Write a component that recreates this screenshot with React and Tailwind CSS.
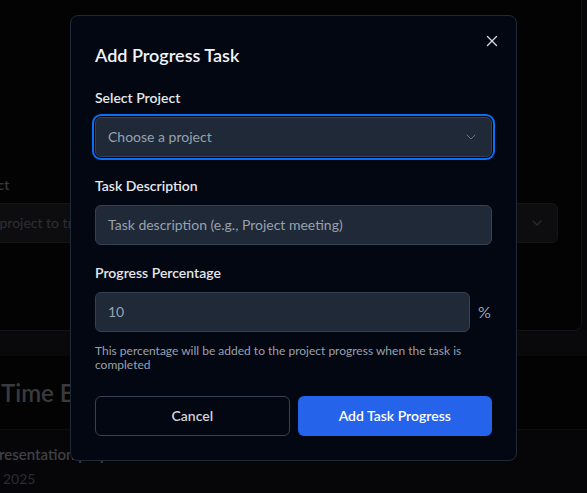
import { ChevronDown, X } from "lucide-react";

function Backdrop() {
  return (
    <div className="flex flex-col h-full">
      <div className="h-[331px] bg-[#070709] flex">
        <div className="w-[582px] h-full bg-[#030304] border-r border-b border-[#131316] rounded-br-lg flex flex-col pt-[175px]">
          <div className="-ml-[76px] text-sm font-semibold text-[#3a3a3e] leading-5">Select Project</div>
          <div className="mt-[8px] -ml-[65px] w-[623px] h-10 rounded-md bg-[#0d0d10] border border-[#151518] flex items-center justify-between px-3">
            <span className="text-sm text-[#2f2f33]">Select a project to track time</span>
            <ChevronDown size={16} className="text-[#2a2a2e]" />
          </div>
        </div>
      </div>
      <div className="h-[25px] bg-[#09090b]" />
      <div className="h-[73px] bg-[#030304] flex items-center">
        <h2 className="ml-[1px] text-2xl font-semibold text-[#3a3a3e]">Time Entries</h2>
      </div>
      <div className="flex-1 bg-[#060608] border-t border-[#0d0d10] pt-[14px]">
        <div className="-ml-[10px] text-[15px] font-semibold text-[#404045] leading-5">Presentation prep</div>
        <div className="mt-[5px] -ml-[44px] text-sm text-[#2c2c30]">Jan 15, 2025</div>
      </div>
    </div>
  );
}

function Field({ label, children, className }) {
  return (
    <div className={className}>
      <div className="text-sm font-semibold text-gray-200 leading-5">{label}</div>
      <div className="mt-[9px]">{children}</div>
    </div>
  );
}

export default function App() {
  return (
    <div className="relative w-full h-[493px] overflow-hidden bg-[#020203] font-['Lato',sans-serif]">
      <Backdrop />
      <div className="absolute inset-0 flex justify-center pt-[15px]">
        <div className="relative w-[447px] h-[446px] bg-[#030712] border border-[#1f2937] rounded-lg px-6 pt-6">
          <button className="absolute right-[15px] top-[16px] text-gray-300">
            <X size={18} strokeWidth={1.8} />
          </button>
          <h2 className="text-lg font-semibold text-gray-100 leading-7 mt-px">Add Progress Task</h2>

          <Field label="Select Project" className="mt-[19px]">
            <div className="h-10 rounded-md bg-[#1f2937] border border-[#374151] ring-2 ring-[#0b6ef5] ring-offset-1 ring-offset-[#030712] flex items-center justify-between pl-3 pr-3">
              <span className="text-sm text-gray-400">Choose a project</span>
              <ChevronDown size={16} strokeWidth={1.5} className="text-gray-500" />
            </div>
          </Field>

          <Field label="Task Description" className="mt-[19px]">
            <div className="h-10 rounded-md bg-[#1f2937] border border-[#374151] flex items-center pl-3">
              <span className="text-sm text-gray-400">Task description (e.g., Project meeting)</span>
            </div>
          </Field>

          <Field label="Progress Percentage" className="mt-[18px]">
            <div className="flex items-center gap-2">
              <div className="flex-1 h-10 rounded-md bg-[#1f2937] border border-[#374151] flex items-center pl-3">
                <span className="text-sm text-gray-400">10</span>
              </div>
              <span className="text-base text-gray-400 w-[14px]">%</span>
            </div>
          </Field>

          <p className="mt-3 text-xs leading-[14px] text-gray-400 pr-2">
            This percentage will be added to the project progress when the task is completed
          </p>

          <div className="mt-6 grid grid-cols-2 gap-2">
            <button className="h-10 rounded-md border border-[#374151] text-sm font-semibold text-gray-300">
              Cancel
            </button>
            <button className="h-10 rounded-md bg-[#2563eb] text-sm font-semibold text-white">
              Add Task Progress
            </button>
          </div>
        </div>
      </div>
    </div>
  );
}
